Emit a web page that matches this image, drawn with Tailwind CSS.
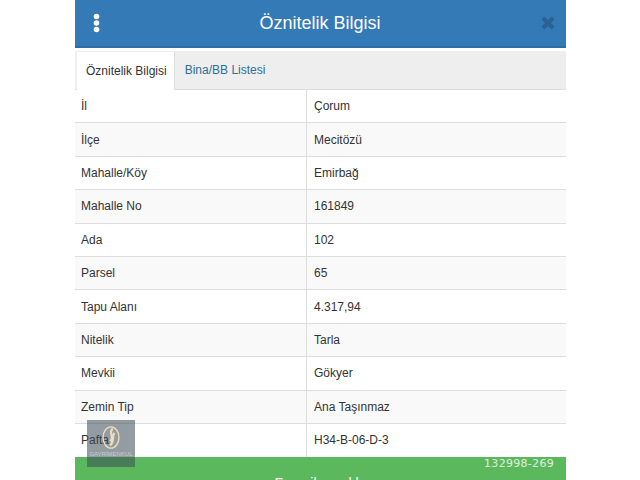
<!DOCTYPE html>
<html lang="en">
<head>
    <meta charset="UTF-8">
    <title>Öznitelik Bilgisi</title>
    <script src="https://cdn.jsdelivr.net/npm/@tailwindcss/browser@4"></script>
</head>
<body class="bg-white h-[480px] overflow-hidden font-['Liberation_Sans',sans-serif] text-[#333]">
    <div class="relative w-[491px] h-[480px] ml-[75px] overflow-hidden">
        <!-- header -->
        <div class="flex items-center justify-between h-[48px] bg-[#337ab7] border-b-2 border-[#2e6da4] pl-[18px] pr-[11px]">
            <svg width="7" height="20" viewBox="0 0 7 20" fill="#fff"><circle cx="3.5" cy="3.5" r="2.8"/><circle cx="3.5" cy="10" r="2.8"/><circle cx="3.5" cy="16.5" r="2.8"/></svg>
            <h1 class="text-[18px] text-white leading-none mr-[1px]">Öznitelik Bilgisi</h1>
            <svg width="14" height="14" viewBox="0 0 14 14" stroke="#23527c" stroke-width="4" class="opacity-60"><path d="M2 2L12 12M12 2L2 12"/></svg>
        </div>
        <!-- tabs -->
        <div class="flex items-end h-[39px] mt-[3px] bg-[#eee] border-b border-[#ddd] pl-[2px] text-[12px]">
            <div class="flex items-center h-[38px] pl-[9px] pr-[7px] -mb-px bg-white border-r border-[#ddd]">Öznitelik Bilgisi</div>
            <div class="flex items-center h-[38px] pl-[10px] text-[#2f6f96]">Bina/BB Listesi</div>
        </div>
        <!-- rows -->
        <div class="text-[12px]">
            <div class="flex items-center h-[33.4px] border-b border-[#ddd] bg-white"><div class="flex items-center h-full w-[232px] pl-[6px] border-r border-[#ddd]">İl</div><div class="pl-[7px]">Çorum</div></div>
            <div class="flex items-center h-[33.4px] border-b border-[#ddd] bg-[#f9f9f9]"><div class="flex items-center h-full w-[232px] pl-[6px] border-r border-[#ddd]">İlçe</div><div class="pl-[7px]">Mecitözü</div></div>
            <div class="flex items-center h-[33.4px] border-b border-[#ddd] bg-white"><div class="flex items-center h-full w-[232px] pl-[6px] border-r border-[#ddd]">Mahalle/Köy</div><div class="pl-[7px]">Emirbağ</div></div>
            <div class="flex items-center h-[33.4px] border-b border-[#ddd] bg-[#f9f9f9]"><div class="flex items-center h-full w-[232px] pl-[6px] border-r border-[#ddd]">Mahalle No</div><div class="pl-[7px]">161849</div></div>
            <div class="flex items-center h-[33.4px] border-b border-[#ddd] bg-white"><div class="flex items-center h-full w-[232px] pl-[6px] border-r border-[#ddd]">Ada</div><div class="pl-[7px]">102</div></div>
            <div class="flex items-center h-[33.4px] border-b border-[#ddd] bg-[#f9f9f9]"><div class="flex items-center h-full w-[232px] pl-[6px] border-r border-[#ddd]">Parsel</div><div class="pl-[7px]">65</div></div>
            <div class="flex items-center h-[33.4px] border-b border-[#ddd] bg-white"><div class="flex items-center h-full w-[232px] pl-[6px] border-r border-[#ddd]">Tapu Alanı</div><div class="pl-[7px]">4.317,94</div></div>
            <div class="flex items-center h-[33.4px] border-b border-[#ddd] bg-[#f9f9f9]"><div class="flex items-center h-full w-[232px] pl-[6px] border-r border-[#ddd]">Nitelik</div><div class="pl-[7px]">Tarla</div></div>
            <div class="flex items-center h-[33.4px] border-b border-[#ddd] bg-white"><div class="flex items-center h-full w-[232px] pl-[6px] border-r border-[#ddd]">Mevkii</div><div class="pl-[7px]">Gökyer</div></div>
            <div class="flex items-center h-[33.4px] border-b border-[#ddd] bg-[#f9f9f9]"><div class="flex items-center h-full w-[232px] pl-[6px] border-r border-[#ddd]">Zemin Tip</div><div class="pl-[7px]">Ana Taşınmaz</div></div>
            <div class="flex items-center h-[33px] bg-white"><div class="flex items-center h-full w-[232px] pl-[6px] border-r border-[#ddd]">Pafta</div><div class="pl-[7px]">H34-B-06-D-3</div></div>
        </div>
        <!-- button -->
        <div class="relative h-[40px] bg-[#5cb85c] text-white text-center text-[14px] pt-[16px]">
            Favorilere ekle
            <span class="absolute right-[12px] top-[0px] text-[11px] tracking-[0.3px] font-['DejaVu_Sans',sans-serif] text-white/80 leading-[14px]">132998-269</span>
        </div>
        <!-- watermark -->
        <div class="absolute left-[12px] top-[420px] flex flex-col items-center w-[48px] h-[47px] bg-[#3a4a55]/55">
            <svg width="18" height="23" viewBox="0 0 20 26" class="mt-[6px]" fill="none" stroke="#efdcbc" stroke-width="2.5"><ellipse cx="10" cy="13" rx="9" ry="12" stroke-width="1.5"/><path d="M12 3C6 8 15 12 9 17M14 8C10 12 15 16 9 22"/></svg>
            <div class="mt-[2px] text-[6px] leading-[6px] text-white/50 whitespace-nowrap">GAYRİMENKUL</div>
        </div>
    </div>
</body>
</html>
